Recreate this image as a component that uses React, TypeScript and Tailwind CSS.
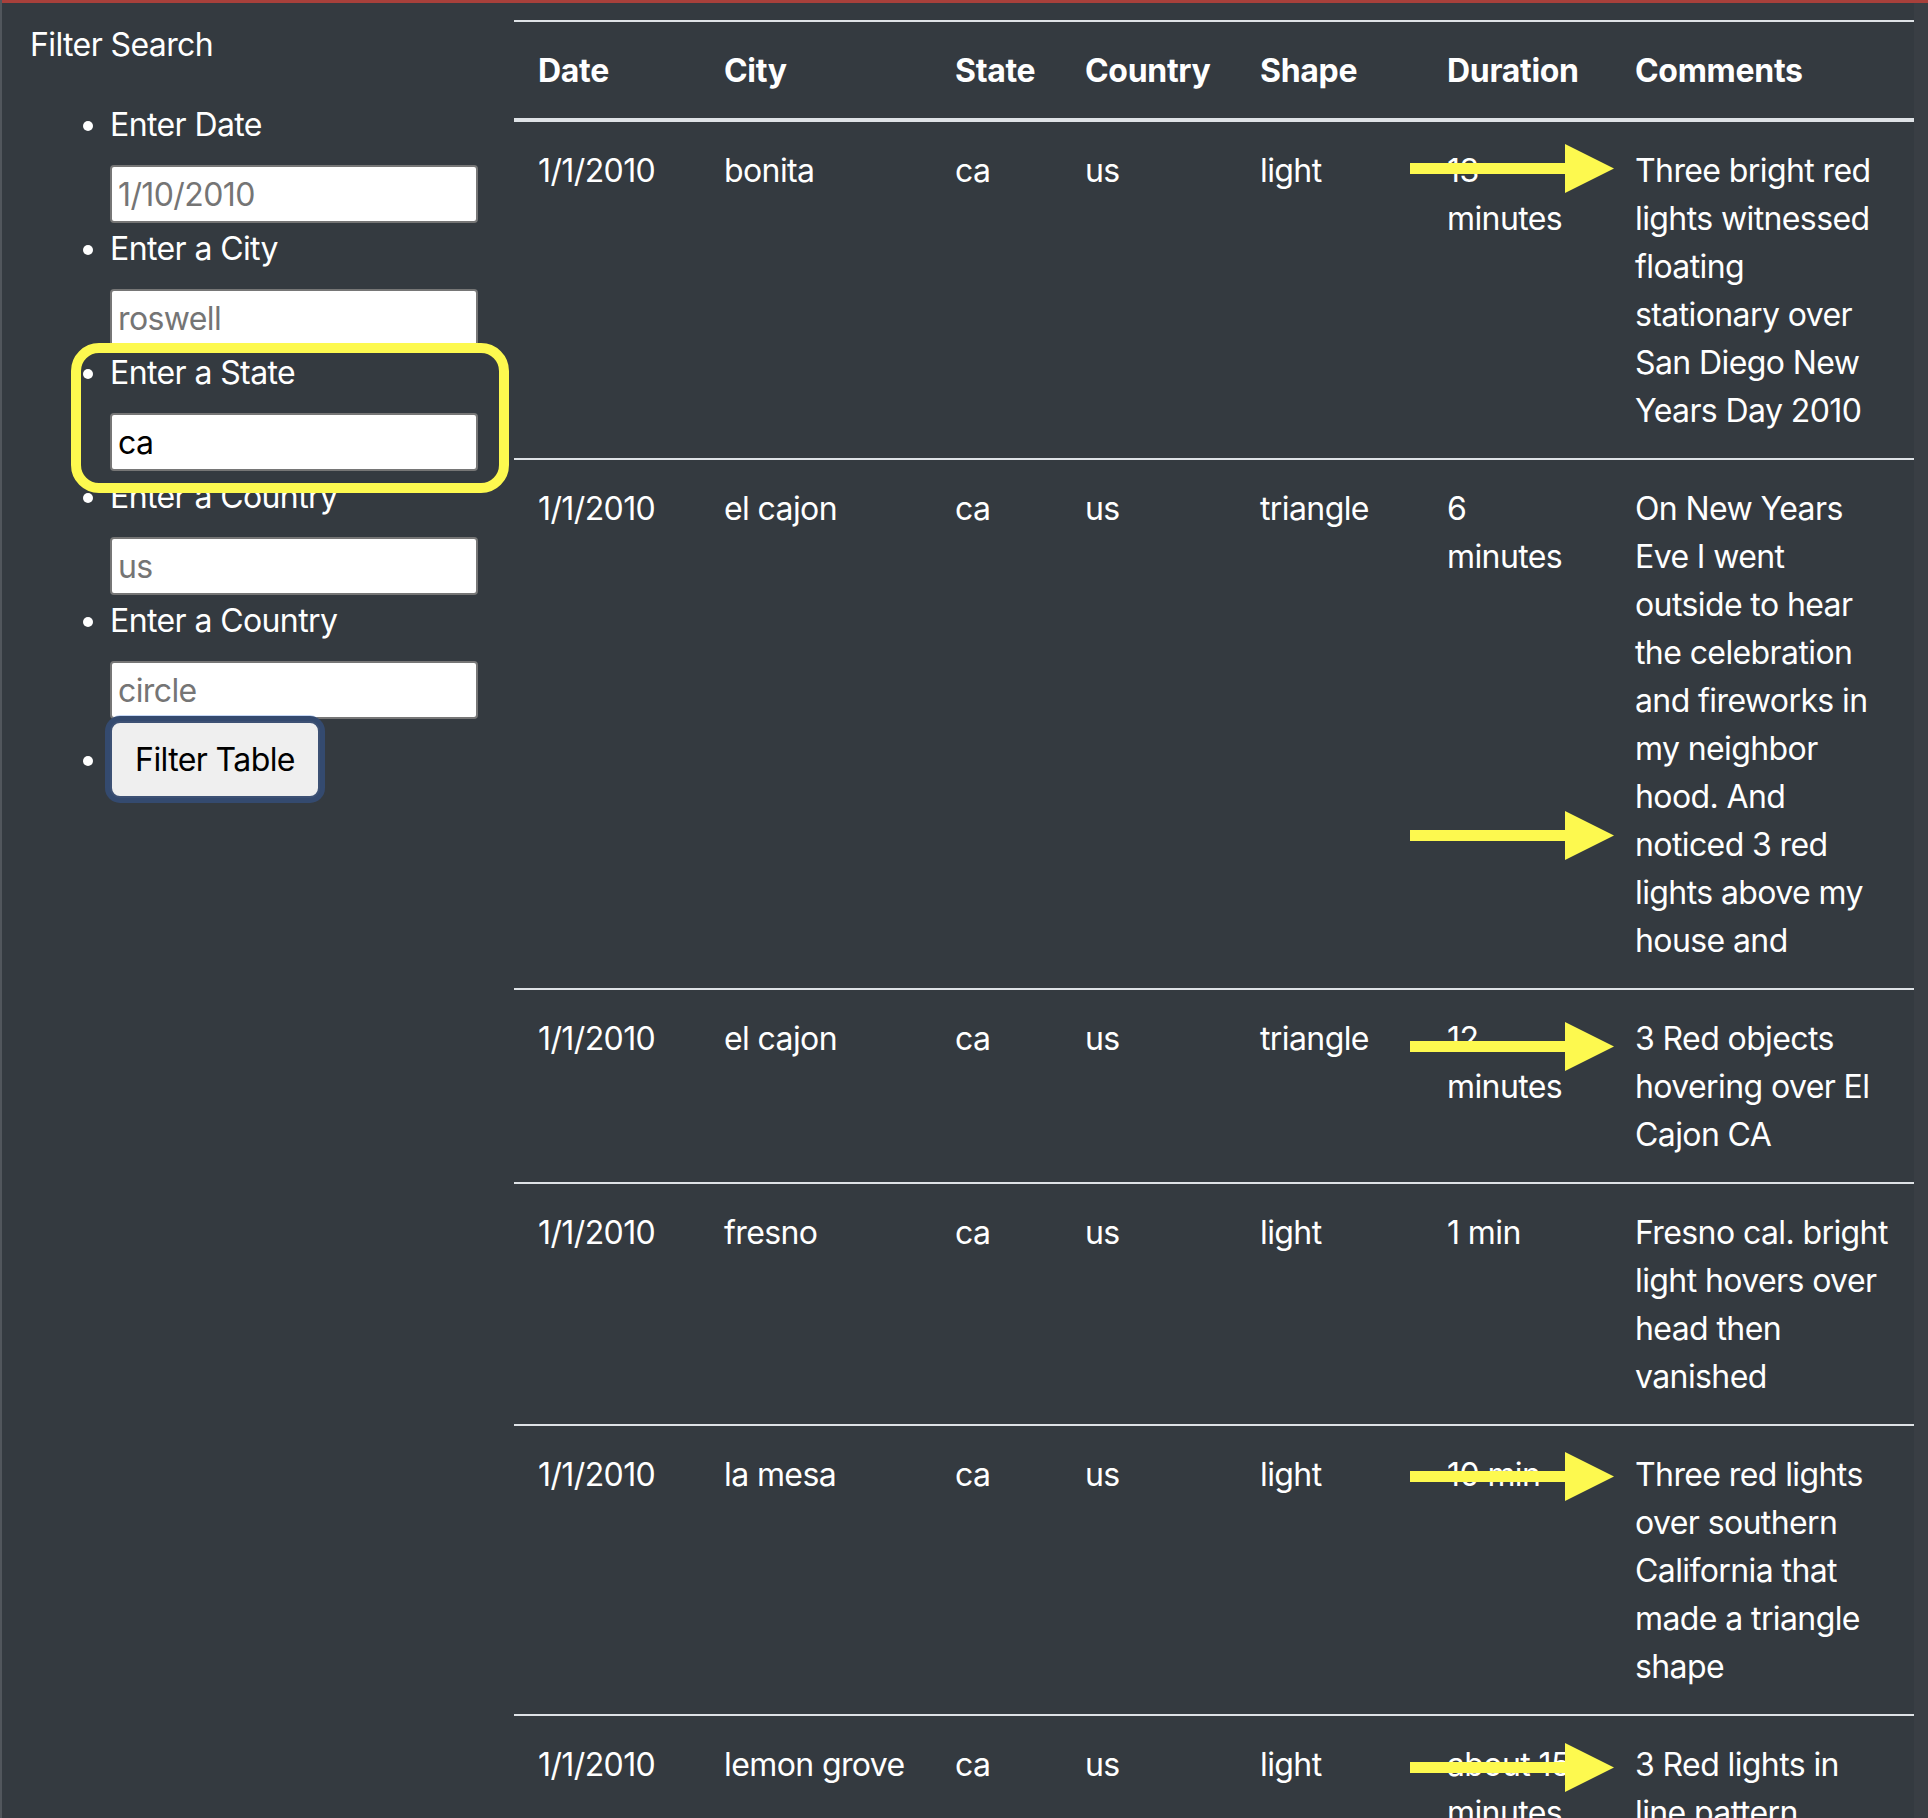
const rows = [
  {
    date: "1/1/2010",
    city: "bonita",
    state: "ca",
    country: "us",
    shape: "light",
    duration: ["13", "minutes"],
    comments: [
      "Three bright red",
      "lights witnessed",
      "floating",
      "stationary over",
      "San Diego New",
      "Years Day 2010",
    ],
  },
  {
    date: "1/1/2010",
    city: "el cajon",
    state: "ca",
    country: "us",
    shape: "triangle",
    duration: ["6", "minutes"],
    comments: [
      "On New Years",
      "Eve I went",
      "outside to hear",
      "the celebration",
      "and fireworks in",
      "my neighbor",
      "hood. And",
      "noticed 3 red",
      "lights above my",
      "house and",
    ],
  },
  {
    date: "1/1/2010",
    city: "el cajon",
    state: "ca",
    country: "us",
    shape: "triangle",
    duration: ["12", "minutes"],
    comments: ["3 Red objects", "hovering over El", "Cajon CA"],
  },
  {
    date: "1/1/2010",
    city: "fresno",
    state: "ca",
    country: "us",
    shape: "light",
    duration: ["1 min"],
    comments: ["Fresno cal. bright", "light hovers over", "head then", "vanished"],
  },
  {
    date: "1/1/2010",
    city: "la mesa",
    state: "ca",
    country: "us",
    shape: "light",
    duration: ["10 min"],
    comments: [
      "Three red lights",
      "over southern",
      "California that",
      "made a triangle",
      "shape",
    ],
  },
  {
    date: "1/1/2010",
    city: "lemon grove",
    state: "ca",
    country: "us",
    shape: "light",
    duration: ["about 15", "minutes"],
    comments: ["3 Red lights in", "line pattern", "over the city"],
  },
];

const filters = [
  { label: "Enter Date", placeholder: "1/10/2010" },
  { label: "Enter a City", placeholder: "roswell" },
  { label: "Enter a State", value: "ca" },
  { label: "Enter a Country", placeholder: "us" },
  { label: "Enter a Country", placeholder: "circle" },
];

// annotation arrows: top edge of each arrow head
const arrowTops = [144, 811, 1022, 1452, 1743];

function Lines({ lines }: { lines: string[] }) {
  return (
    <>
      {lines.map((l, i) => (
        <div key={i} className="whitespace-nowrap">
          {l}
        </div>
      ))}
    </>
  );
}

function Arrow({ top }: { top: number }) {
  return (
    <svg
      className="absolute left-[1408px] pointer-events-none"
      style={{ top }}
      width="204"
      height="49"
      viewBox="0 0 204 49"
    >
      <rect x="0" y="19" width="156" height="11" fill="#fdf94f" />
      <polygon points="155,0 204,24.5 155,49" fill="#fdf94f" />
    </svg>
  );
}

export default function App() {
  return (
    <div
      className="relative min-h-screen bg-[#343a40] text-white text-[32px] leading-[48px] tracking-[-0.6px] border-l-2 border-[#51565c]"
      style={{ fontFamily: "Inter, 'Noto Sans', sans-serif" }}
    >
      <div className="h-[3px] bg-[#a8403b]" />
      <div className="flex">
        {/* sidebar */}
        <div className="w-[512px] shrink-0 pl-[28px] pt-[18px]">
          <div className="mb-[32px]">Filter Search</div>
          <ul className="list-disc pl-[80px]">
            {filters.map((f, i) => (
              <li key={i}>
                <div className="mb-[16px]">{f.label}</div>
                <input
                  className="block w-[368px] h-[58px] mb-[2px] bg-white border-2 border-[#767676] rounded-[4px] px-[6px] text-[32px] tracking-[-0.6px] text-black placeholder:text-[#757575] outline-none"
                  placeholder={f.placeholder}
                  defaultValue={f.value}
                />
              </li>
            ))}
            <li>
              <button className="w-[210px] h-[77px] bg-[#efefef] text-black tracking-[-0.6px] rounded-[10px] border-2 border-[#3d5174] shadow-[0_0_0_5px_#344a6f,0_-6px_0_0_#c6d8f5]">
                Filter Table
              </button>
            </li>
          </ul>
        </div>

        {/* table */}
        <div className="w-[1400px] shrink-0 pt-[17px]">
          <table className="w-[1400px] table-fixed border-separate border-spacing-0 text-left">
            <colgroup>
              <col className="w-[186px]" />
              <col className="w-[231px]" />
              <col className="w-[130px]" />
              <col className="w-[175px]" />
              <col className="w-[187px]" />
              <col className="w-[188px]" />
              <col className="w-[303px]" />
            </colgroup>
            <thead>
              <tr>
                {["Date", "City", "State", "Country", "Shape", "Duration", "Comments"].map((h) => (
                  <th
                    key={h}
                    className="px-[24px] pt-[25px] pb-[23px] text-[32px] leading-[48px] tracking-[-0.3px] font-bold align-top whitespace-nowrap border-t-2 border-b-4 border-[#dee2e6]"
                  >
                    {h}
                  </th>
                ))}
              </tr>
            </thead>
            <tbody>
              {rows.map((r, i) => (
                <tr key={i}>
                  {[r.date, r.city, r.state, r.country, r.shape].map((c, j) => (
                    <td
                      key={j}
                      className="px-[24px] pt-[25px] pb-[23px] align-top whitespace-nowrap border-b-2 border-[#dee2e6]"
                    >
                      {c}
                    </td>
                  ))}
                  <td className="px-[24px] pt-[25px] pb-[23px] align-top border-b-2 border-[#dee2e6]">
                    <Lines lines={r.duration} />
                  </td>
                  <td className="px-[24px] pt-[25px] pb-[23px] align-top border-b-2 border-[#dee2e6]">
                    <Lines lines={r.comments} />
                  </td>
                </tr>
              ))}
            </tbody>
          </table>
        </div>
        <div className="flex-1 bg-[#393e44]" />
      </div>

      {/* yellow annotations */}
      <div className="absolute left-[69px] top-[343px] w-[438px] h-[150px] border-[10px] border-[#fdf94f] rounded-[28px] pointer-events-none" />
      {arrowTops.map((t) => (
        <Arrow key={t} top={t} />
      ))}
    </div>
  );
}
